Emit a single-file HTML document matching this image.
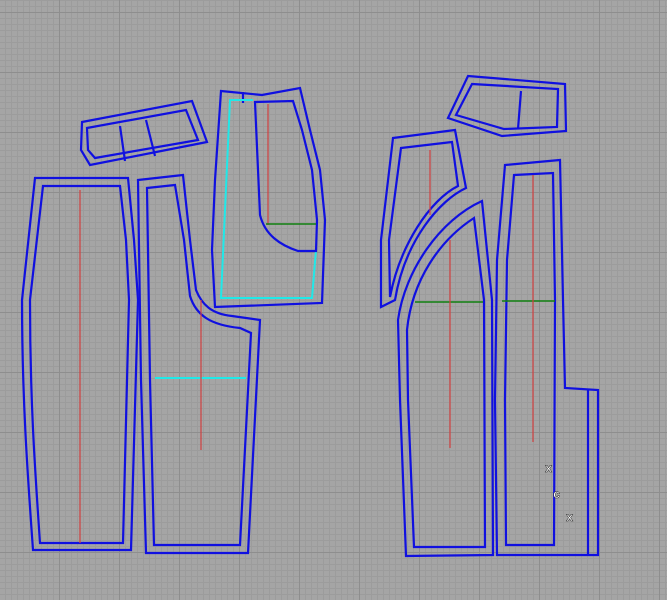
<!DOCTYPE html>
<html><head><style>
html,body{margin:0;padding:0}
body{width:667px;height:600px;overflow:hidden;background-color:#a5a5a5;
background-image:
linear-gradient(to right,#8e8e8e 1px,transparent 1px),
linear-gradient(to bottom,#8e8e8e 1px,transparent 1px),
linear-gradient(to right,#9c9c9c 1px,transparent 1px),
linear-gradient(to bottom,#9c9c9c 1px,transparent 1px);
background-size:60px 60px,60px 60px,6px 6px,6px 6px;
background-position:59px 0,0 12px,5px 0,0 0;}
svg{position:absolute;left:0;top:0}
.b{fill:none;stroke:#1010e0;stroke-width:2.2}
.r{stroke:#d04040;stroke-width:1.2}
.g{stroke:#108010;stroke-width:1.5}
.c{fill:none;stroke:#20e8e8;stroke-width:2}
.m{font:bold 12px "Liberation Mono",monospace;fill:#fff;stroke:#222;stroke-width:.5}
</style></head><body>
<svg width="667" height="600" viewBox="0 0 667 600">
<path class="b" d="M35,178 L128,178 L134,240 L138,300 L131,550 L33,550 C28,480 22,400 22,300 Z"/>
<path class="b" d="M43,186 L120,186 L126,240 L129,300 L123,543 L40,543 C35,470 30,400 30,300 Z"/>
<line class="r" x1="80" y1="190" x2="80" y2="543"/>
<path class="b" d="M138,180 L183,175 L190,240 L196,290 C202,305 212,314 232,316 L260,320 L248,553 L146,553 L141,380 Z"/>
<path class="b" d="M147,188 L175,185 L184,240 L190,296 C196,315 210,325 240,328 L251,333 L240,545 L154,545 L150,380 Z"/>
<line x1="155" y1="378" x2="246" y2="378" stroke="#20e8e8" stroke-width="2"/>
<line class="r" x1="201" y1="300" x2="201" y2="450"/>
<path class="b" d="M82,122 L192,101 L207,142 L90,165 L81,150 Z"/>
<path class="b" d="M87,128 L186,110 L198,140 L95,158 L88,150 Z"/>
<line class="b" x1="120" y1="126" x2="125" y2="161"/>
<line class="b" x1="146" y1="120" x2="155" y2="156"/>
<path class="b" d="M221,91 L262,95 L300,88 L310,130 L320,170 L325,220 L322,303 L215,307 L212,250 L215,180 Z"/>
<line class="b" x1="243" y1="92" x2="243" y2="103"/>
<path class="c" d="M253,100 L230,100 L221,298 L312,298 L316,250"/>
<path class="b" d="M255,102 L293,101 L302,130 L312,170 L317,220 L316,251 L298,251 C280,245 265,235 260,215 Z"/>
<line class="r" x1="268" y1="104" x2="268" y2="225"/>
<line class="g" x1="266" y1="224" x2="316" y2="224"/>
<path class="b" d="M468,76 L565,84 L566,131 L502,136 L448,118 Z"/>
<path class="b" d="M472,84 L558,89 L557,127 L504,129 L456,115 Z"/>
<line class="b" x1="521" y1="91" x2="518" y2="129"/>
<path class="b" d="M393,138 L455,130 L466,188 C440,200 405,240 395,300 L381,307 L381,240 Z"/>
<path class="b" d="M401,148 L452,142 L458,186 C430,200 400,245 390,297 L389,240 Z"/>
<line class="r" x1="430" y1="150" x2="430" y2="215"/>
<path class="b" d="M482,201 L492,300 L493,555 L406,556 L400,400 L398,320 C405,270 440,220 482,201 Z"/>
<path class="b" d="M474,218 L484,300 L485,547 L414,547 L408,400 L407,330 C412,280 440,240 474,218 Z"/>
<line class="g" x1="415" y1="302" x2="483" y2="302"/>
<line class="r" x1="450" y1="240" x2="450" y2="448"/>
<path class="b" d="M505,165 L560,160 L563,300 L565,388 L598,390 L598,555 L497,555 L495,400 L497,260 Z"/>
<path class="b" d="M514,175 L553,173 L555,300 L554,545 L506,545 L505,400 L507,260 Z"/>
<line class="b" x1="588" y1="390" x2="588" y2="555"/>
<line class="g" x1="502" y1="301" x2="555" y2="301"/>
<line class="r" x1="533" y1="175" x2="533" y2="442"/>
<text class="m" x="545" y="472">x</text>
<text class="m" x="553" y="498">c</text>
<text class="m" x="566" y="521">x</text>
</svg>
</body></html>
